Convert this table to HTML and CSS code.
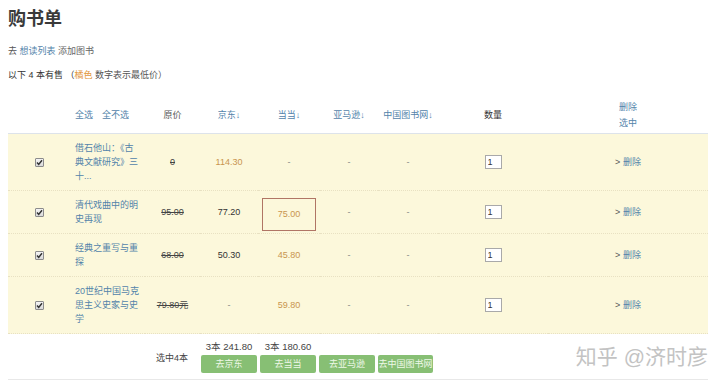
FILE: index.html
```html
<!DOCTYPE html>
<html lang="zh-CN">
<head>
<meta charset="utf-8">
<title>购书单</title>
<link rel="stylesheet" href="styles.css">
</head>
<body>
<div class="page">
  <h1 class="title">购书单</h1>
  <p class="nav">去 <a class="link">想读列表</a> <span class="plain">添加图书</span></p>
  <p class="intro">以下 4 本有售 （<span class="orange-word">橘色</span> <span class="soft">数字表示最低价）</span></p>

  <table class="cart">
    <colgroup>
      <col class="c-check"><col class="c-title"><col class="c-orig"><col class="c-jd"><col class="c-dd"><col class="c-amz"><col class="c-cn"><col class="c-qty"><col class="c-del">
    </colgroup>
    <thead>
      <tr>
        <th></th>
        <th class="left"><a class="link">全选</a><a class="link sp">全不选</a></th>
        <th>原价</th>
        <th><a class="link">京东↓</a></th>
        <th><a class="link">当当↓</a></th>
        <th><a class="link">亚马逊↓</a></th>
        <th><a class="link">中国图书网↓</a></th>
        <th class="dark">数量</th>
        <th><a class="link">删除<br>选中</a></th>
      </tr>
    </thead>
    <tbody>
      <tr>
        <td><span class="cb"><svg viewBox="0 0 9 9" width="9" height="9"><path d="M2 4.6 L3.7 6.4 L7 2.2" fill="none" stroke="#333" stroke-width="1.5"/></svg></span></td>
        <td class="left"><a class="link">借石他山：《古<br>典文献研究》三<br>十...</a></td>
        <td><s class="orig">0</s></td>
        <td class="orange">114.30</td>
        <td class="dash">-</td>
        <td class="dash">-</td>
        <td class="dash">-</td>
        <td><input class="qty" type="text" value="1"></td>
        <td><span class="gt">&gt;</span> <a class="link">删除</a></td>
      </tr>
      <tr>
        <td><span class="cb"><svg viewBox="0 0 9 9" width="9" height="9"><path d="M2 4.6 L3.7 6.4 L7 2.2" fill="none" stroke="#333" stroke-width="1.5"/></svg></span></td>
        <td class="left"><a class="link">清代戏曲中的明<br>史再现</a></td>
        <td><s class="orig">95.00</s></td>
        <td class="dark">77.20</td>
        <td class="hl"><span class="box orange">75.00</span></td>
        <td class="dash">-</td>
        <td class="dash">-</td>
        <td><input class="qty" type="text" value="1"></td>
        <td><span class="gt">&gt;</span> <a class="link">删除</a></td>
      </tr>
      <tr>
        <td><span class="cb"><svg viewBox="0 0 9 9" width="9" height="9"><path d="M2 4.6 L3.7 6.4 L7 2.2" fill="none" stroke="#333" stroke-width="1.5"/></svg></span></td>
        <td class="left"><a class="link">经典之重写与重<br>探</a></td>
        <td><s class="orig">68.00</s></td>
        <td class="dark">50.30</td>
        <td class="orange">45.80</td>
        <td class="dash">-</td>
        <td class="dash">-</td>
        <td><input class="qty" type="text" value="1"></td>
        <td><span class="gt">&gt;</span> <a class="link">删除</a></td>
      </tr>
      <tr>
        <td><span class="cb"><svg viewBox="0 0 9 9" width="9" height="9"><path d="M2 4.6 L3.7 6.4 L7 2.2" fill="none" stroke="#333" stroke-width="1.5"/></svg></span></td>
        <td class="left"><a class="link">20世纪中国马克<br>思主义史家与史<br>学</a></td>
        <td><s class="orig">79.80元</s></td>
        <td class="dash">-</td>
        <td class="orange">59.80</td>
        <td class="dash">-</td>
        <td class="dash">-</td>
        <td><input class="qty" type="text" value="1"></td>
        <td><span class="gt">&gt;</span> <a class="link">删除</a></td>
      </tr>
    </tbody>
  </table>

  <div class="foot">
    <span class="sel">选中4本</span>
    <div class="grp"><span class="sum">3本 241.80</span><span class="btn">去京东</span></div>
    <div class="grp"><span class="sum">3本 180.60</span><span class="btn">去当当</span></div>
    <div class="grp"><span class="sum"></span><span class="btn">去亚马逊</span></div>
    <div class="grp last"><span class="sum"></span><span class="btn">去中国图书网</span></div>
  </div>

  <div class="wm">知乎 @济时彦</div>
</div>
</body>
</html>
```
FILE: styles.css
```css
body {
  margin: 8px;
  background: #fff;
  font-family: "Liberation Sans", "Noto Sans CJK SC", sans-serif;
  font-size: 9px;
  color: #555;
}

.page {
  position: relative;
  width: 700px;
}

.title {
  margin: 0;
  font-size: 18px;
  line-height: 22px;
  font-weight: bold;
  color: #3a3a3a;
}

.nav {
  margin: 14px 0 0;
  line-height: 14px;
  color: #555;
}

.link {
  color: #5283aa;
  text-decoration: none;
}

.plain {
  color: #666;
}

.intro {
  margin: 10px 0 0;
  line-height: 14px;
  color: #333;
}

.orange-word {
  color: #e3983c;
}

.soft {
  color: #555;
}

.cart {
  margin-top: 14px;
  width: 700px;
  border-collapse: collapse;
  table-layout: fixed;
}

.c-check { width: 62px; }
.c-title { width: 75px; }
.c-orig { width: 55px; }
.c-jd { width: 58px; }
.c-dd { width: 62px; }
.c-amz { width: 58px; }
.c-cn { width: 60px; }
.c-qty { width: 110px; }
.c-del { width: 160px; }

.cart th {
  height: 37px;
  padding: 0;
  font-weight: normal;
  line-height: 16px;
  text-align: center;
  vertical-align: middle;
  color: #555;
  border-bottom: 1px solid #dde3ea;
}

.cart th.left,
.cart td.left {
  text-align: left;
  padding-left: 5px;
}

.sp {
  margin-left: 9px;
}

.cart td {
  background: #fcf8db;
  padding: 7px 0;
  line-height: 14px;
  text-align: center;
  vertical-align: middle;
  border-bottom: 1px dotted #e8e1c2;
}

.dark {
  color: #333;
}

.cart th.dark {
  color: #333;
}

.orange {
  color: #c8954f;
}

.dash {
  color: #888;
}

.orig {
  color: #444;
}

.cb {
  display: inline-block;
  width: 9px;
  height: 9px;
  box-sizing: border-box;
  border: 1px solid #8c8c8c;
  border-radius: 1px;
  background: linear-gradient(#f6f6f6, #d9d9d9);
  vertical-align: middle;
  position: relative;
}

.cb svg {
  position: absolute;
  left: -1px;
  top: -1px;
}

.cart td.hl {
  padding: 7px 4px 2px;
}

.box {
  display: block;
  height: 33px;
  line-height: 31px;
  box-sizing: border-box;
  border: 1px solid #b07565;
}

.qty {
  width: 17px;
  height: 14px;
  box-sizing: border-box;
  margin: 0;
  padding: 0 2px;
  border: 1px solid #a9a9a9;
  background: #fff;
  font: 9px "Liberation Sans", sans-serif;
  color: #333;
  vertical-align: middle;
}

.gt {
  color: #555;
}

.foot {
  display: flex;
  align-items: center;
  padding: 7px 0 6px 148px;
  border-bottom: 1px solid #e8e8e8;
}

.sel {
  width: 45px;
  color: #444;
}

.grp {
  display: flex;
  flex-direction: column;
  align-items: center;
  width: 56px;
  margin-right: 3px;
}

.grp.last {
  width: 55px;
}

.sum {
  height: 12px;
  line-height: 12px;
  margin-bottom: 2px;
  font-size: 9.5px;
  color: #444;
  white-space: nowrap;
}

.btn {
  display: block;
  width: 100%;
  height: 18px;
  line-height: 18px;
  border-radius: 2px;
  background: #87bf74;
  color: #eef8e8;
  text-align: center;
  white-space: nowrap;
}

.wm {
  position: absolute;
  right: 0;
  top: 337px;
  font-size: 21px;
  line-height: 24px;
  color: #c3c3c3;
  text-shadow: 0 0 1px #fff;
  white-space: nowrap;
}
```
